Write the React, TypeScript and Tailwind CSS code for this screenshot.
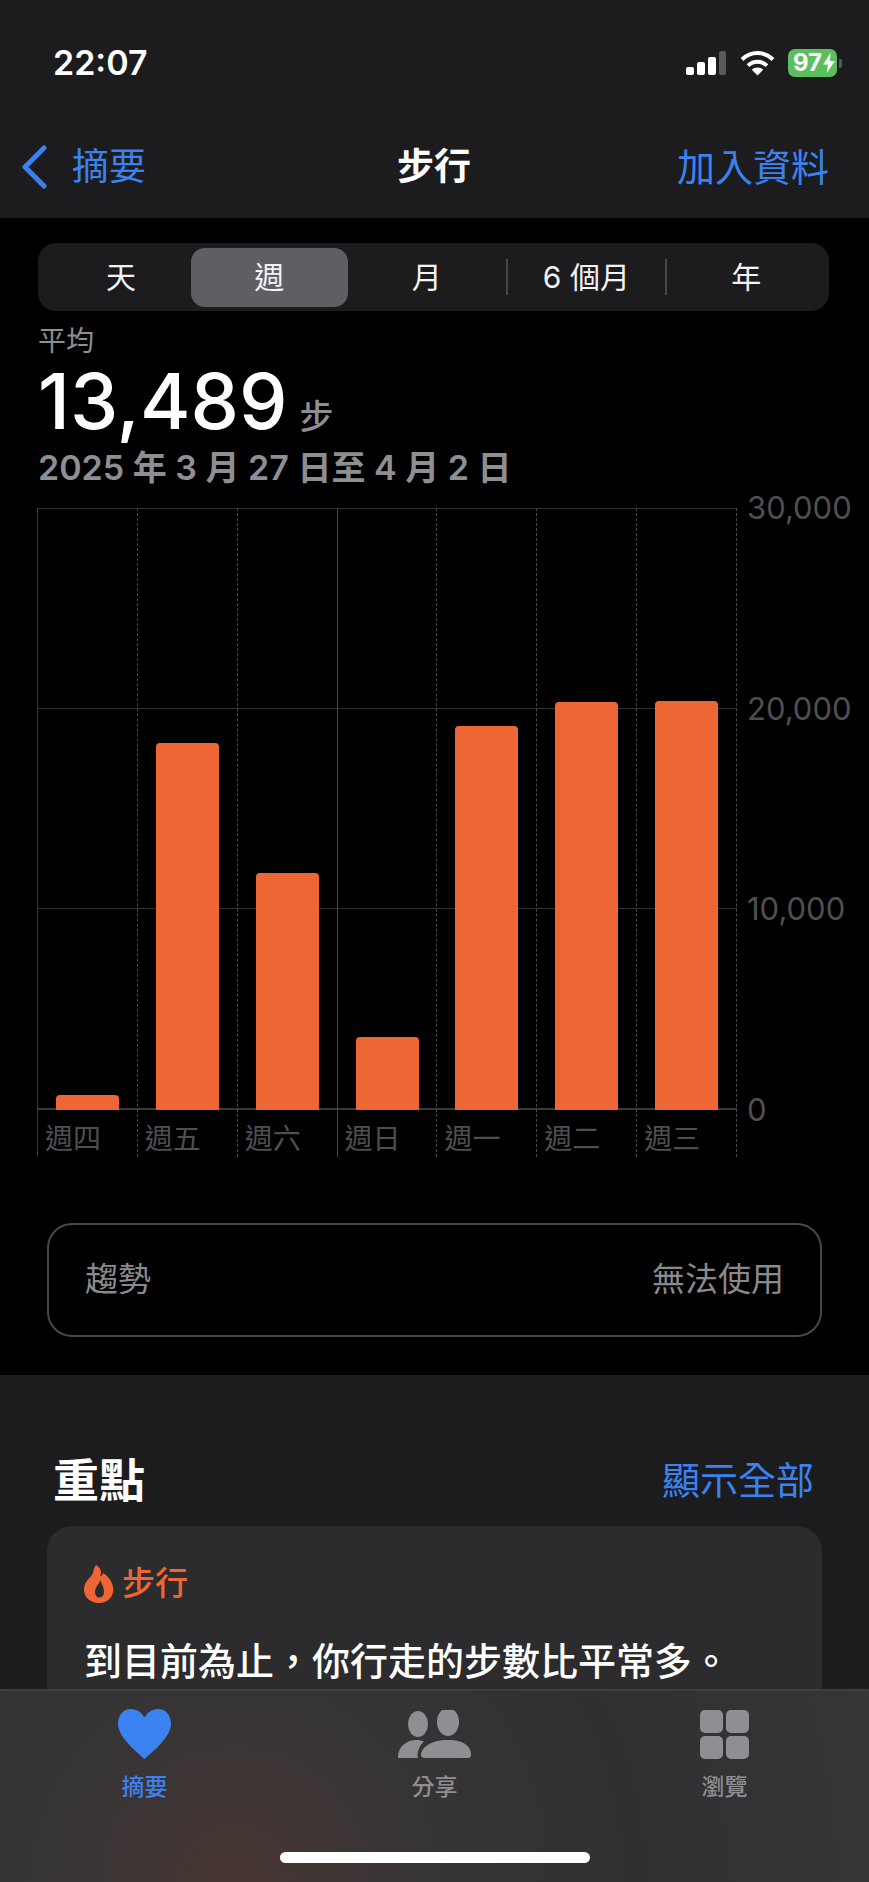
import React from "react";

const bars = [
  { day: "週四", top: 1101 },
  { day: "週五", top: 749 },
  { day: "週六", top: 879 },
  { day: "週日", top: 1043 },
  { day: "週一", top: 732 },
  { day: "週二", top: 708 },
  { day: "週三", top: 707 },
];
const BASE = 1115;

function Signal() {
  return (
    <div className="flex items-end gap-[3px] w-[41px] h-[24px]">
      <div className="w-[8px] h-[8px] rounded-[2px] bg-white" />
      <div className="w-[8px] h-[13px] rounded-[2px] bg-white" />
      <div className="w-[8px] h-[18px] rounded-[2px] bg-white" />
      <div className="w-[7px] h-[24px] rounded-[2px] bg-[#5a5a5c]" />
    </div>
  );
}

function Wifi() {
  return (
    <svg width="35" height="25" viewBox="0 0 35 25" fill="none">
      <path d="M2 8.5C6.2 4.4 11.6 2 17.5 2S28.8 4.4 33 8.5" stroke="#fff" strokeWidth="4" strokeLinecap="butt" />
      <path d="M8 14.6c2.6-2.4 5.8-3.8 9.5-3.8s6.900 1.400 9.500 3.800" stroke="#fff" strokeWidth="4" />
      <path d="M17.500 24.500 11.800 18.700c1.500-1.300 3.500-2.100 5.700-2.100s4.200.8 5.700 2.100z" fill="#fff" />
    </svg>
  );
}

function Battery() {
  return (
    <div className="flex items-center gap-[2px]">
      <div className="w-[49px] h-[28px] rounded-[7px] bg-[#5cbf5e] flex items-center pl-[5px] gap-[1px] text-white font-bold text-[24px] leading-none">
        <span>97</span>
        <svg width="12" height="20" viewBox="0 0 12 20">
          <path d="M7.500 0 0 11.500h4.800L3.800 20 12 8H6.900z" fill="#fff" />
        </svg>
      </div>
      <div className="w-[3px] h-[9px] rounded-r-[2px] bg-[#5a5a5c]" />
    </div>
  );
}

function Segment({ label, active }: { label: string; active?: boolean }) {
  return (
    <div
      className={`flex-1 flex items-center justify-center text-[30px] text-[#f2f2f7] h-[59px] rounded-[14px] ${
        active ? "bg-[#5f5f63]" : ""
      }`}
    >
      {label}
    </div>
  );
}

function Flame() {
  return (
    <svg width="30" height="38" viewBox="0 0 30 38">
      <path
        fillRule="evenodd"
        d="M12 0c2 1 5 3.500 5 7.500 0 2-.7 3.500-.7 3.500 1.300-.3 2.500-1.400 3-3 5 3.500 10 9.500 10 16.500C29.300 32 23.500 38 15 38S0 32.500 0 24.500C0 15 9 12 9.500 6 9.700 3.500 11 1.500 12 0zM16 15c.5 3-5 6.500-5 12 0 3 1.800 5.500 4.200 5.500 2.800 0 4.800-2.500 4.800-5.500 0-4.500-2.500-9.500-4-12z"
        fill="#ee6633"
      />
    </svg>
  );
}

function Heart() {
  return (
    <svg width="53" height="50" viewBox="0 0 53 50">
      <path
        d="M26.500 50C14 39 0 27 0 14.500 0 6 5.500 0 13 0c6 0 10.500 3.500 13.500 8.500C29.500 3.500 34 0 40 0c7.500 0 13 6 13 14.500C53 27 39 39 26.500 50z"
        fill="#3b82f0"
      />
    </svg>
  );
}

function People() {
  return (
    <svg width="73" height="48" viewBox="0 0 73 48" fill="#8e8e93">
      <ellipse cx="20" cy="14" rx="10" ry="13" />
      <ellipse cx="50" cy="12" rx="11" ry="14" />
      <path d="M0 48c-.5-9 6-18 19-18 3 0 5 .6 7 1.500-4 3.500-6.500 9-6.500 14.500 0 1 .2 2 .5 2z" />
      <path d="M27 48c-3 0-4-1.500-4-3 0-7 9-15 27-15s23 8 23 15c0 1.500-1 3-3 3z" />
    </svg>
  );
}

function Grid4() {
  return (
    <div className="grid grid-cols-2 gap-[3px] w-[49px]">
      <div className="h-[23px] rounded-[5px] bg-[#8e8e93]" />
      <div className="h-[23px] rounded-[5px] bg-[#8e8e93]" />
      <div className="h-[23px] rounded-[5px] bg-[#8e8e93]" />
      <div className="h-[23px] rounded-[5px] bg-[#8e8e93]" />
    </div>
  );
}

function Chart() {
  return (
    <div className="relative mt-[20px] ml-[37px] h-[649px] w-[700px]">
      {/* gridlines */}
      <div className="absolute inset-x-0 top-0 h-[602px] flex flex-col justify-between">
        <div className="h-px bg-[#2e2e30]" />
        <div className="h-px bg-[#2e2e30]" />
        <div className="h-px bg-[#2e2e30]" />
        <div className="h-[2px] bg-[#3a3a3c]" />
      </div>
      {/* day columns */}
      <div className="relative grid grid-cols-7 h-full border-l border-[#3a3a3c]">
        {bars.map((b, i) => (
          <div
            key={b.day}
            className={`flex flex-col border-r ${
              i === 2 ? "border-solid border-[#48484a]" : "border-dashed border-[#48484a]"
            }`}
          >
            <div className="h-[602px] flex items-end pl-[18px]">
              <div
                className="w-[63px] bg-[#ee6633] rounded-t-[4px]"
                style={{ height: BASE - b.top + 1 }}
              />
            </div>
            <div className="pl-[7px] pt-[12px] text-[28px] leading-[34px] text-[#4f4f52] whitespace-nowrap">
              {b.day}
            </div>
          </div>
        ))}
      </div>
      {/* y axis */}
      <div className="absolute left-[710px] top-[-20px] h-[642px] flex flex-col justify-between text-[31px] leading-[40px] text-[#4f4f52] whitespace-nowrap">
        <span>30,000</span>
        <span>20,000</span>
        <span>10,000</span>
        <span>0</span>
      </div>
    </div>
  );
}

export default function App() {
  return (
    <div className="relative w-[869px] h-[1882px] overflow-hidden bg-black text-white font-[family-name:Inter,'Noto_Sans_CJK_TC',sans-serif]">
      {/* status + nav */}
      <div className="h-[218px] bg-[#1c1c1e] flex flex-col">
        <div className="flex items-center justify-between pt-[43px] pl-[53px] pr-[27px] h-[83px]">
          <span className="text-[34px] leading-[40px] font-semibold">22:07</span>
          <div className="flex items-center gap-[13px]">
            <Signal />
            <Wifi />
            <Battery />
          </div>
        </div>
        <div className="flex items-center justify-between mt-[62px] pl-[21px] pr-[40px] h-[44px] relative">
          <div className="flex items-center gap-[25px] text-[#3b82f0]">
            <svg width="26" height="44" viewBox="0 0 26 44" fill="none">
              <path d="M23 3 4 22l19 19" stroke="#3b82f0" strokeWidth="5" strokeLinecap="round" strokeLinejoin="round" />
            </svg>
            <span className="text-[37px] leading-[44px]">摘要</span>
          </div>
          <span className="absolute left-[397px] text-[37px] leading-[44px] font-semibold">步行</span>
          <span className="text-[38px] leading-[44px] text-[#3b82f0]">加入資料</span>
        </div>
      </div>

      {/* range picker */}
      <div className="mx-[38px] mt-[25px] h-[68px] w-[791px] rounded-[18px] bg-[#1c1c1e] flex items-center px-[4px] relative">
        <Segment label="天" />
        <div className="w-[157px] -ml-[9px] mr-0 flex">
          <Segment label="週" active />
        </div>
        <Segment label="月" />
        <div className="w-[2px] h-[36px] bg-[#48484a]" />
        <Segment label="6 個月" />
        <div className="w-[2px] h-[36px] bg-[#48484a]" />
        <Segment label="年" />
      </div>

      {/* summary */}
      <div className="pl-[38px] pt-[13px] flex flex-col">
        <span className="text-[28px] leading-[34px] text-[#8e8e93]">平均</span>
        <div className="flex items-baseline gap-[12px] h-[86px]">
          <span className="text-[77px] leading-[86px] font-medium">13,489</span>
          <span className="text-[34px] text-[#8e8e93] font-medium">步</span>
        </div>
        <span className="text-[34px] leading-[40px] mt-[4px] font-semibold text-[#8e8e93]">2025 年 3 月 27 日至 4 月 2 日</span>
      </div>

      <Chart />

      {/* trend */}
      <div className="mx-[47px] mt-[66px] h-[114px] rounded-[25px] border-2 border-[#48484a] flex items-center justify-between px-[36px] text-[33px] text-[#8a8a8e]">
        <span>趨勢</span>
        <span>無法使用</span>
      </div>

      {/* highlights */}
      <div className="mt-[38px] bg-[#1c1c1e] h-[600px] px-[47px]">
        <div className="flex items-center justify-between h-[151px] pt-[60px] pl-[6px] pr-[8px]">
          <span className="text-[46px] font-bold">重點</span>
          <span className="text-[38px] text-[#3b82f0]">顯示全部</span>
        </div>
        <div className="h-[300px] rounded-[25px] bg-[#2c2c2e] px-[37px] pt-[33px]">
          <div className="flex items-center gap-[8px] text-[33px] font-medium text-[#ee6633]">
            <Flame />
            <span>步行</span>
          </div>
          <p className="mt-[27px] text-[38px] leading-[50px] font-medium whitespace-nowrap">
            到目前為止，你行走的步數比平常多。
          </p>
        </div>
      </div>

      {/* tab bar */}
      <div className="absolute inset-x-0 bottom-0 h-[193px] border-t-2 border-[#3f3f41] bg-[#303032] bg-[radial-gradient(circle_at_27%_100%,#463632_0,#373435_28%,#303032_60%,#363638_100%)]">
        <div className="grid grid-cols-[289px_291px_289px] pt-[18px]">
          <div className="flex flex-col items-center">
            <div className="h-[50px] flex items-center">
              <Heart />
            </div>
            <span className="mt-[14px] text-[23px] leading-[28px] font-medium text-[#3b82f0]">摘要</span>
          </div>
          <div className="flex flex-col items-center">
            <div className="h-[50px] flex items-center">
              <People />
            </div>
            <span className="mt-[14px] text-[23px] leading-[28px] font-medium text-[#8e8e93]">分享</span>
          </div>
          <div className="flex flex-col items-center">
            <div className="h-[50px] flex items-center">
              <Grid4 />
            </div>
            <span className="mt-[14px] text-[23px] leading-[28px] font-medium text-[#8e8e93]">瀏覽</span>
          </div>
        </div>
        <div className="absolute bottom-[19px] left-[280px] w-[310px] h-[11px] rounded-full bg-white" />
      </div>
    </div>
  );
}
